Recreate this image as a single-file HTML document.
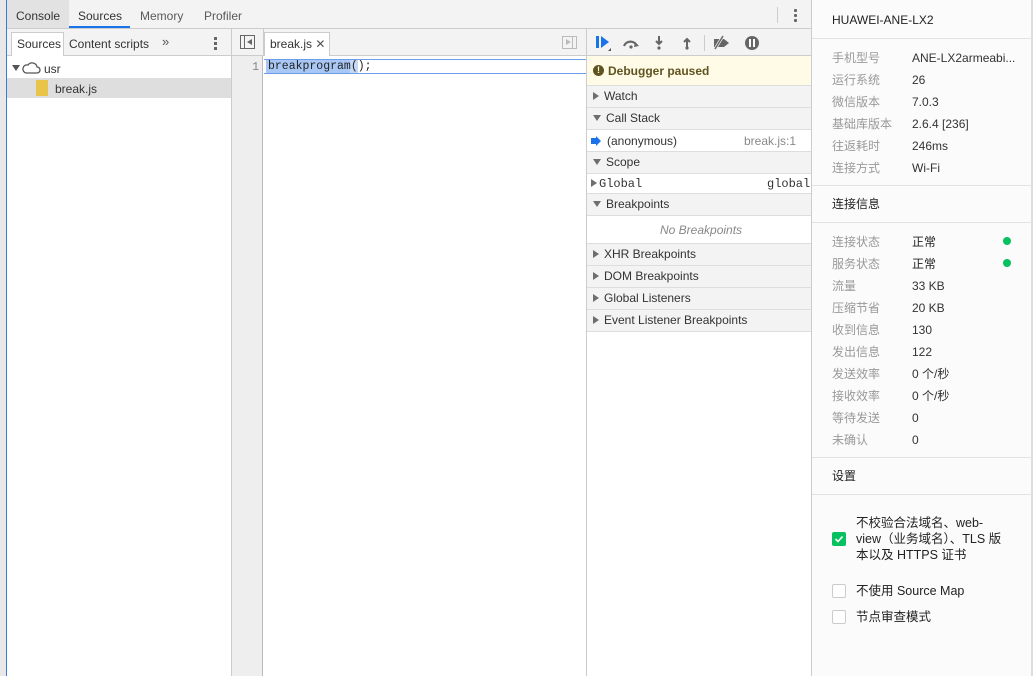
<!DOCTYPE html>
<html><head><meta charset="utf-8"><style>
*{box-sizing:border-box;margin:0;padding:0}
body{width:1033px;height:676px;overflow:hidden;background:#fff;font-family:"Liberation Sans","Noto Sans CJK SC",sans-serif;font-size:12px;line-height:14px;color:#333;position:relative}
.a{position:absolute;line-height:14px}
.hd{position:absolute;left:587px;width:224px;height:22px;background:#f3f3f3;border-bottom:1px solid #ddd;line-height:21px;padding-left:6px;color:#333}
.tri{display:inline-block;width:0;height:0;border-left:6px solid #6e6e6e;border-top:4px solid transparent;border-bottom:4px solid transparent;margin-right:5px;vertical-align:0px}
.trd{display:inline-block;width:0;height:0;border-top:6px solid #6e6e6e;border-left:4px solid transparent;border-right:4px solid transparent;margin-right:5px;vertical-align:1px}
.rp{position:absolute;left:832px;font-size:12px;line-height:14px}
.lb{color:#999}
.rl{position:absolute;left:812px;width:221px;height:1px;background:#e3e3e3}
.mono{font-family:"Liberation Mono",monospace;font-size:12px}
</style></head><body>
<div class="a" style="left:0;top:0;width:7px;height:676px;background:#e8e8e8"></div>
<div class="a" style="left:6px;top:0;width:1px;height:676px;background:#3a7bd5"></div>
<div class="a" style="left:7px;top:0;width:805px;height:29px;background:#f3f3f3;border-bottom:1px solid #ccc"></div>
<div class="a" style="left:7px;top:0;width:62px;height:28px;background:#e2e2e2"></div>
<div class="a" style="left:16px;top:9px;color:#333">Console</div>
<div class="a" style="left:78px;top:9px;color:#333">Sources</div>
<div class="a" style="left:69px;top:26px;width:61px;height:2px;background:#1a73e8"></div>
<div class="a" style="left:140px;top:9px;color:#5a5a5a">Memory</div>
<div class="a" style="left:204px;top:9px;color:#5a5a5a">Profiler</div>
<div class="a" style="left:777px;top:7px;width:1px;height:16px;background:#ccc"></div>
<div class="a" style="left:794px;top:9px;width:3px;height:3px;background:#666;box-shadow:0 5px #666,0 10px #666;border-radius:1px"></div>
<div class="a" style="left:7px;top:29px;width:225px;height:27px;background:#f3f3f3;border-bottom:1px solid #ccc"></div>
<div class="a" style="left:11px;top:32px;width:53px;height:24px;background:#fff;border:1px solid #ccc;border-bottom:none"></div>
<div class="a" style="left:17px;top:37px">Sources</div>
<div class="a" style="left:69px;top:37px;color:#333">Content scripts</div>
<div class="a" style="left:162px;top:35px;font-size:13px;color:#555">»</div>
<div class="a" style="left:214px;top:37px;width:3px;height:3px;background:#666;box-shadow:0 5px #666,0 10px #666"></div>
<div class="a" style="left:12px;top:65px;border-top:6px solid #555;border-left:4px solid transparent;border-right:4px solid transparent"></div>
<svg class="a" style="left:21px;top:61px" width="20" height="14"><path d="M5 12h11a3 3 0 0 0 0-6 5 5 0 0 0-9-2 4 4 0 0 0-2 8z" fill="none" stroke="#555" stroke-width="1.3"/></svg>
<div class="a" style="left:44px;top:62px">usr</div>
<div class="a" style="left:7px;top:78px;width:224px;height:20px;background:#dedede"></div>
<div class="a" style="left:36px;top:80px;width:12px;height:16px;background:#e8c44a"></div>
<div class="a" style="left:55px;top:82px">break.js</div>
<div class="a" style="left:231px;top:29px;width:1px;height:647px;background:#ccc"></div>
<div class="a" style="left:232px;top:29px;width:355px;height:27px;background:#f3f3f3;border-bottom:1px solid #ccc"></div>
<div class="a" style="left:240px;top:35px;width:15px;height:14px;border:1px solid #666"></div>
<div class="a" style="left:244px;top:35px;width:1px;height:14px;background:#666"></div>
<div class="a" style="left:247px;top:39px;border-right:5px solid #666;border-top:3px solid transparent;border-bottom:3px solid transparent"></div>
<div class="a" style="left:263px;top:29px;width:1px;height:27px;background:#ccc"></div>
<div class="a" style="left:264px;top:32px;width:66px;height:24px;background:#fff;border:1px solid #ccc;border-bottom:none"></div>
<div class="a" style="left:270px;top:37px">break.js <span style="color:#555">✕</span></div>
<div class="a" style="left:562px;top:36px;width:15px;height:13px;border:1px solid #bbb"></div>
<div class="a" style="left:566px;top:39px;border-left:5px solid #bbb;border-top:3px solid transparent;border-bottom:3px solid transparent"></div>
<div class="a" style="left:572px;top:36px;width:1px;height:13px;background:#bbb"></div>
<div class="a" style="left:232px;top:56px;width:31px;height:620px;background:#eee;border-right:1px solid #bbb"></div>
<div class="a mono" style="left:252px;top:60px;color:#888">1</div>
<div class="a" style="left:264px;top:59px;width:323px;height:15px;border-top:1px solid #6d9fe8;border-bottom:1px solid #6d9fe8"></div>
<div class="a" style="left:266px;top:60px;width:84px;height:13px;background:#a8c7f5"></div>
<div class="a" style="left:350px;top:60px;width:8px;height:13px;background:#c5d8f6"></div>
<div class="a mono" style="left:268px;top:60px;color:#222;font-size:11.5px">breakprogram();</div>
<div class="a" style="left:586px;top:29px;width:1px;height:647px;background:#ccc"></div>
<div class="a" style="left:587px;top:29px;width:224px;height:27px;background:#f3f3f3;border-bottom:1px solid #ccc"></div>
<svg class="a" style="left:594px;top:34px" width="180" height="18">
<rect x="2" y="2" width="3" height="12" fill="#1a73e8"/><path d="M7 2l8 6-8 6z" fill="#1a73e8"/><path d="M14 17l3-3v3z" fill="#555"/>
<path d="M30 12a7 7 0 0 1 13 0" fill="none" stroke="#666" stroke-width="2.2"/><path d="M41 8l4 4-5 1z" fill="#666"/><circle cx="37" cy="13" r="1.6" fill="#666"/>
<path d="M65 2v7M62 7l3 3 3-3" stroke="#666" stroke-width="2" fill="none"/><circle cx="65" cy="14" r="1.6" fill="#666"/>
<path d="M93 14V6M90 8l3-3 3 3" stroke="#666" stroke-width="2" fill="none"/><circle cx="93" cy="14" r="1.6" fill="#666"/>
<rect x="110" y="1" width="1" height="16" fill="#ccc"/>
<path d="M120 5h10l5 4-5 4h-10z" fill="#666"/><path d="M121 15l8-13" stroke="#f3f3f3" stroke-width="3"/><path d="M121 15l8-13" stroke="#666" stroke-width="1.5"/>
<circle cx="158" cy="9" r="7" fill="#666"/><rect x="155" y="5" width="2" height="8" fill="#fff"/><rect x="159" y="5" width="2" height="8" fill="#fff"/>
</svg>
<div class="a" style="left:587px;top:56px;width:224px;height:30px;background:#fffbe6;border-bottom:1px solid #ddd"></div>
<div class="a" style="left:593px;top:65px;width:11px;height:11px;border-radius:50%;background:#5f5320;color:#fffbe6;font-size:9px;font-weight:bold;text-align:center;line-height:11px">!</div>
<div class="a" style="left:608px;top:64px;font-weight:bold;color:#5f5320">Debugger paused</div>
<div class="hd" style="top:86px"><span class="tri"></span>Watch</div>
<div class="hd" style="top:108px"><span class="trd"></span>Call Stack</div>
<div class="a" style="left:587px;top:130px;width:224px;height:22px;background:#fff;border-bottom:1px solid #ddd"></div>
<svg class="a" style="left:591px;top:136px" width="10" height="10"><path d="M0 2h5V0l5 5-5 5V8H0z" fill="#1a73e8"/></svg>
<div class="a" style="left:607px;top:134px">(anonymous)</div>
<div class="a" style="left:744px;top:134px;color:#888">break.js:1</div>
<div class="hd" style="top:152px"><span class="trd"></span>Scope</div>
<div class="a" style="left:587px;top:174px;width:224px;height:20px;background:#fff;border-bottom:1px solid #ddd"></div>
<div class="a mono" style="left:591px;top:177px"><span class="tri" style="margin-right:2px"></span>Global</div>
<div class="a mono" style="left:767px;top:177px">global</div>
<div class="hd" style="top:194px"><span class="trd"></span>Breakpoints</div>
<div class="a" style="left:587px;top:216px;width:224px;height:28px;background:#fff;border-bottom:1px solid #ddd"></div>
<div class="a" style="left:660px;top:223px;color:#888;font-style:italic">No Breakpoints</div>
<div class="hd" style="top:244px"><span class="tri"></span>XHR Breakpoints</div>
<div class="hd" style="top:266px"><span class="tri"></span>DOM Breakpoints</div>
<div class="hd" style="top:288px"><span class="tri"></span>Global Listeners</div>
<div class="hd" style="top:310px"><span class="tri"></span>Event Listener Breakpoints</div>
<div class="a" style="left:811px;top:0;width:1px;height:676px;background:#ccc"></div>
<div class="a" style="left:812px;top:0;width:221px;height:676px;background:#fbfbfb"></div>
<div class="a" style="left:1031px;top:0;width:2px;height:676px;background:#ddd"></div>
<div class="rp" style="top:13px;color:#222">HUAWEI-ANE-LX2</div>
<div class="rl" style="top:38px"></div>
<div class="rp lb" style="top:51px">手机型号</div><div class="a" style="left:912px;top:51px">ANE-LX2armeabi...</div>
<div class="rp lb" style="top:73px">运行系统</div><div class="a" style="left:912px;top:73px">26</div>
<div class="rp lb" style="top:95px">微信版本</div><div class="a" style="left:912px;top:95px">7.0.3</div>
<div class="rp lb" style="top:117px">基础库版本</div><div class="a" style="left:912px;top:117px">2.6.4 [236]</div>
<div class="rp lb" style="top:139px">往返耗时</div><div class="a" style="left:912px;top:139px">246ms</div>
<div class="rp lb" style="top:161px">连接方式</div><div class="a" style="left:912px;top:161px">Wi-Fi</div>
<div class="rl" style="top:185px"></div>
<div class="rp" style="top:197px;color:#222">连接信息</div>
<div class="rl" style="top:222px"></div>
<div class="rp lb" style="top:235px">连接状态</div><div class="a" style="left:912px;top:235px;color:#222">正常</div>
<div class="a" style="left:1003px;top:237px;width:8px;height:8px;border-radius:50%;background:#07c160"></div>
<div class="rp lb" style="top:257px">服务状态</div><div class="a" style="left:912px;top:257px;color:#222">正常</div>
<div class="a" style="left:1003px;top:259px;width:8px;height:8px;border-radius:50%;background:#07c160"></div>
<div class="rp lb" style="top:279px">流量</div><div class="a" style="left:912px;top:279px">33 KB</div>
<div class="rp lb" style="top:301px">压缩节省</div><div class="a" style="left:912px;top:301px">20 KB</div>
<div class="rp lb" style="top:323px">收到信息</div><div class="a" style="left:912px;top:323px">130</div>
<div class="rp lb" style="top:345px">发出信息</div><div class="a" style="left:912px;top:345px">122</div>
<div class="rp lb" style="top:367px">发送效率</div><div class="a" style="left:912px;top:367px">0 个/秒</div>
<div class="rp lb" style="top:389px">接收效率</div><div class="a" style="left:912px;top:389px">0 个/秒</div>
<div class="rp lb" style="top:411px">等待发送</div><div class="a" style="left:912px;top:411px">0</div>
<div class="rp lb" style="top:433px">未确认</div><div class="a" style="left:912px;top:433px">0</div>
<div class="rl" style="top:457px"></div>
<div class="rp" style="top:469px;color:#222">设置</div>
<div class="rl" style="top:494px"></div>
<div class="a" style="left:832px;top:532px;width:14px;height:14px;background:#07c160;border-radius:2px"></div>
<svg class="a" style="left:832px;top:532px" width="14" height="14"><path d="M3.5 7l2.5 2.5 4.5-5" stroke="#fff" stroke-width="1.6" fill="none"/></svg>
<div class="a" style="left:856px;top:515px;width:175px;line-height:16px;color:#222;font-size:12.5px;white-space:nowrap">不校验合法域名、web-<br>view（业务域名）、TLS 版<br>本以及 HTTPS 证书</div>
<div class="a" style="left:832px;top:584px;width:14px;height:14px;border:1px solid #ccc;background:#fff;border-radius:2px"></div>
<div class="a" style="left:856px;top:584px;color:#222;font-size:12.5px">不使用 Source Map</div>
<div class="a" style="left:832px;top:610px;width:14px;height:14px;border:1px solid #ccc;background:#fff;border-radius:2px"></div>
<div class="a" style="left:856px;top:610px;color:#222;font-size:12.5px">节点审查模式</div>
</body></html>
